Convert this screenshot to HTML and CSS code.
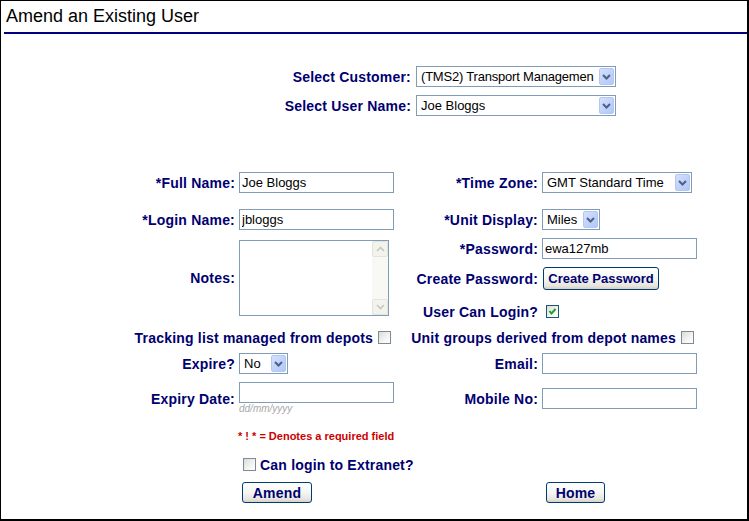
FILE: index.html
```html
<!DOCTYPE html>
<html>
<head>
<meta charset="utf-8">
<title>Amend an Existing User</title>
<link rel="stylesheet" href="styles.css">
</head>
<body>
<div class="page">
  <h1 class="title">Amend an Existing User</h1>
  <div class="rule"></div>

  <div class="pick">
    <div class="lbl">Select Customer:</div>
    <div class="sel w200"><span class="val tight">(TMS2) Transport Managemen</span><span class="drop"><svg width="15" height="17" viewBox="0 0 15 17"><path d="M4 7 L7.5 10.5 L11 7" fill="none" stroke="#4d6185" stroke-width="2"/></svg></span></div>
    <div class="lbl">Select User Name:</div>
    <div class="sel w200"><span class="val">Joe Bloggs</span><span class="drop"><svg width="15" height="17" viewBox="0 0 15 17"><path d="M4 7 L7.5 10.5 L11 7" fill="none" stroke="#4d6185" stroke-width="2"/></svg></span></div>
  </div>

  <div class="form">
    <div class="lbl c1 r1">*Full Name:</div>
    <div class="fld c2 r1"><input class="txt" type="text" value="Joe Bloggs"></div>
    <div class="lbl c3 r1">*Time Zone:</div>
    <div class="fld c4 r1"><div class="sel w150"><span class="val">GMT Standard Time</span><span class="drop"><svg width="15" height="17" viewBox="0 0 15 17"><path d="M4 7 L7.5 10.5 L11 7" fill="none" stroke="#4d6185" stroke-width="2"/></svg></span></div></div>

    <div class="lbl c1 r2">*Login Name:</div>
    <div class="fld c2 r2"><input class="txt" type="text" value="jbloggs"></div>
    <div class="lbl c3 r2">*Unit Display:</div>
    <div class="fld c4 r2"><div class="sel w58"><span class="val">Miles</span><span class="drop"><svg width="15" height="17" viewBox="0 0 15 17"><path d="M4 7 L7.5 10.5 L11 7" fill="none" stroke="#4d6185" stroke-width="2"/></svg></span></div></div>

    <div class="lbl c1 notes-rows notes-lbl">Notes:</div>
    <div class="c2 notes-rows memo">
      <textarea class="memo-in"></textarea>
      <div class="vscroll">
        <span class="sbtn"><svg width="9" height="6" viewBox="0 0 9 6"><path d="M1 5 L4.5 1.5 L8 5" fill="none" stroke="#c8c7bf" stroke-width="1.6"/></svg></span>
        <span class="strack"></span>
        <span class="sbtn"><svg width="9" height="6" viewBox="0 0 9 6"><path d="M1 1 L4.5 4.5 L8 1" fill="none" stroke="#c8c7bf" stroke-width="1.6"/></svg></span>
      </div>
    </div>
    <div class="lbl c3 r3">*Password:</div>
    <div class="fld c4 r3"><input class="txt" type="text" value="ewa127mb"></div>

    <div class="lbl c3 r4">Create Password:</div>
    <div class="fld c4 r4"><button class="btn create" type="button">Create Password</button></div>

    <div class="lbl c3 r5">User Can Login?</div>
    <div class="fld c4 r5"><span class="cb on"><svg width="11" height="11" viewBox="0 0 11 11"><path d="M2.5 5 L4.5 7.5 L8.5 3" fill="none" stroke="#21a121" stroke-width="2"/></svg></span></div>

    <div class="lbl left-span r6">Tracking list managed from depots <span class="cb"></span></div>
    <div class="lbl right-span r6">Unit groups derived from depot names <span class="cb"></span></div>

    <div class="lbl c1 r7">Expire?</div>
    <div class="fld c2 r7"><div class="sel w49"><span class="val">No</span><span class="drop"><svg width="15" height="17" viewBox="0 0 15 17"><path d="M4 7 L7.5 10.5 L11 7" fill="none" stroke="#4d6185" stroke-width="2"/></svg></span></div></div>
    <div class="lbl c3 r7">Email:</div>
    <div class="fld c4 r7"><input class="txt" type="text" value=""></div>

    <div class="lbl tall c1 r8">Expiry Date:</div>
    <div class="fld tall stack c2 r8"><input class="txt" type="text" value=""><span class="hint">dd/mm/yyyy</span></div>
    <div class="lbl tall c3 r8">Mobile No:</div>
    <div class="fld tall c4 r8"><input class="txt" type="text" value=""></div>

    <div class="fld note-span r9"><span class="req">* ! * = Denotes a required field</span></div>

    <div class="fld note-span r10"><span class="cb extra"></span><span class="cbtext">Can login to Extranet?</span></div>

    <div class="fld c2 r11"><button class="btn amend" type="button">Amend</button></div>
    <div class="fld c4 r11"><button class="btn home" type="button">Home</button></div>
  </div>
</div>
</body>
</html>
```

FILE: styles.css
```css
html, body {
  margin: 0;
  padding: 0;
  background: #ffffff;
}

.page {
  width: 749px;
  height: 521px;
  box-sizing: border-box;
  border-style: solid;
  border-color: #000000;
  border-width: 1px 2px 2px 1px;
  font-family: "Liberation Sans", Arial, sans-serif;
  overflow: hidden;
}

.title {
  margin: 0;
  padding: 4px 0 0 5px;
  font-size: 18px;
  line-height: 22px;
  font-weight: normal;
  color: #000000;
}

.rule {
  margin: 5px 0 0 3px;
  height: 2px;
  background: #000080;
}

.pick {
  display: grid;
  grid-template-columns: 410px 200px;
  column-gap: 5px;
  row-gap: 8px;
  margin-top: 32px;
}

.lbl {
  display: flex;
  align-items: center;
  justify-content: flex-end;
  height: 21px;
  font-size: 14px;
  font-weight: bold;
  letter-spacing: 0.2px;
  color: #000070;
  white-space: nowrap;
}

.fld {
  display: flex;
  align-items: center;
  height: 21px;
}

.form {
  display: grid;
  grid-template-columns: 234px 170px 125px 160px;
  grid-template-rows: 37px 29px 30px 33px 26px 26px 29px 43px 29px 28px 21px;
  column-gap: 4px;
  margin-top: 56px;
  align-items: start;
}

.c1 { grid-column: 1; }
.c2 { grid-column: 2; }
.c3 { grid-column: 3; }
.c4 { grid-column: 4; }
.r1 { grid-row: 1; }
.r2 { grid-row: 2; }
.r3 { grid-row: 3; }
.r4 { grid-row: 4; }
.r5 { grid-row: 5; }
.r6 { grid-row: 6; }
.r7 { grid-row: 7; }
.r8 { grid-row: 8; }
.r9 { grid-row: 9; }
.r10 { grid-row: 10; }
.r11 { grid-row: 11; }

.notes-rows { grid-row: 3 / 6; }

.notes-lbl {
  height: 76px;
  margin-top: 2px;
}

.left-span {
  grid-column: 1 / 3;
  padding-right: 18px;
  gap: 5px;
}

.right-span {
  grid-column: 3 / 5;
  padding-right: 8px;
  gap: 5px;
}

.note-span {
  grid-column: 2 / 4;
}

.tall { height: 33px; }

.stack {
  flex-direction: column;
  align-items: flex-start;
  justify-content: flex-start;
}

.txt {
  width: 155px;
  height: 21px;
  box-sizing: border-box;
  margin: 0;
  border: 1px solid #7f9db9;
  padding: 0 2px;
  font-family: "Liberation Sans", Arial, sans-serif;
  font-size: 13px;
  color: #000000;
  background: #ffffff;
  outline: none;
}

.hint {
  font-size: 10px;
  line-height: 12px;
  font-style: italic;
  color: #a8a8a8;
}

.req {
  font-size: 11px;
  font-weight: bold;
  color: #cc0000;
  margin-left: -1px;
}

/* select boxes */
.sel {
  display: flex;
  align-items: stretch;
  height: 21px;
  box-sizing: border-box;
  border: 1px solid #7f9db9;
  background: #ffffff;
  font-size: 13px;
  color: #000000;
}

.w200 { width: 200px; }
.w150 { width: 150px; }
.w58 { width: 58px; }
.w49 { width: 49px; }

.val {
  flex: 1;
  min-width: 0;
  overflow: hidden;
  white-space: nowrap;
  display: flex;
  align-items: center;
  padding-left: 4px;
}

.val.tight {
  letter-spacing: -0.2px;
}

.drop {
  width: 15px;
  height: 17px;
  margin: 1px;
  box-sizing: border-box;
  border: 1px solid #b4c7f3;
  border-radius: 2px;
  background: linear-gradient(135deg, #d5e1fc 0%, #c1d3fb 50%, #b3c8f6 100%);
  display: flex;
  align-items: center;
  justify-content: center;
}

.drop svg { display: block; margin: -1px; }

/* memo */
.memo {
  display: flex;
  width: 150px;
  height: 76px;
  box-sizing: border-box;
  border: 1px solid #7f9db9;
  margin-top: 2px;
  background: #ffffff;
}

.memo-in {
  flex: 1;
  min-width: 0;
  border: 0;
  margin: 0;
  padding: 2px;
  resize: none;
  outline: none;
  font-family: "Liberation Sans", Arial, sans-serif;
  font-size: 13px;
  overflow: hidden;
}

.vscroll {
  width: 16px;
  display: flex;
  flex-direction: column;
  background: #f8f8f5;
}

.sbtn {
  height: 16px;
  box-sizing: border-box;
  border: 1px solid #e4e3dc;
  border-radius: 2px;
  background: #f3f3ee;
  display: flex;
  align-items: center;
  justify-content: center;
}

.strack { flex: 1; }

/* checkboxes */
.cb {
  display: inline-flex;
  align-items: center;
  justify-content: center;
  width: 13px;
  height: 13px;
  box-sizing: border-box;
  border: 1px solid #7c8a9c;
  background: linear-gradient(135deg, #dcdcd7 0%, #f4f4f1 60%, #ffffff 100%);
  flex: none;
}

.cb.on {
  border-color: #1c5180;
  margin-left: 4px;
}

.cb.extra {
  margin-left: 4px;
}

.cbtext {
  margin-left: 4px;
  font-size: 14px;
  font-weight: bold;
  letter-spacing: 0.2px;
  color: #000070;
  white-space: nowrap;
}

/* buttons */
.btn {
  box-sizing: border-box;
  height: 21px;
  padding: 0;
  margin: 0;
  border: 1px solid #003c74;
  border-radius: 3px;
  background: linear-gradient(#ffffff 0%, #f4f4f0 55%, #e6e5de 85%, #d6d0c5 100%);
  font-family: "Liberation Sans", Arial, sans-serif;
  font-size: 14px;
  font-weight: bold;
  letter-spacing: 0.2px;
  color: #000070;
}

.create {
  width: 116px;
  height: 23px;
  font-size: 13px;
  letter-spacing: 0;
  margin-left: 1px;
}

.amend {
  width: 70px;
  margin-left: 3px;
}

.home {
  width: 59px;
  margin-left: 4px;
}
```
